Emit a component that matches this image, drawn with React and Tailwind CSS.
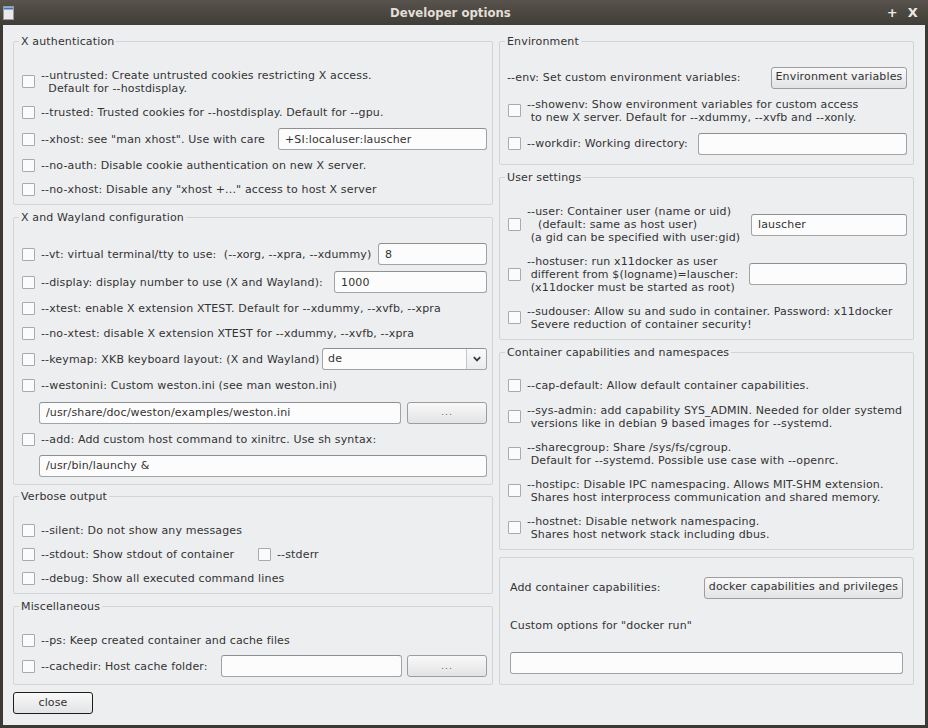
import React from 'react';

function Check() {
  return <span className="inline-block shrink-0 w-[13px] h-[13px] border border-[#a9aaac] bg-[#fbfbfb] rounded-[1px]" />;
}

function Input({ className = '', value = '' }) {
  return (
    <input
      readOnly
      value={value}
      className={`h-[22px] shrink-0 px-[6px] bg-[#fcfcfc] border border-[#a2a3a5] border-t-[#8e8f91] rounded-[3px] outline-none text-[#333] ${className}`}
    />
  );
}

function Btn({ className = '', children }) {
  return (
    <button className={`h-[22px] shrink-0 rounded-[3px] border border-[#9c9d9f] bg-gradient-to-b from-[#f9f9f9] to-[#e2e3e5] text-[#333] ${className}`}>
      {children}
    </button>
  );
}

function Lines({ lines }) {
  return (
    <div className="whitespace-pre leading-[13px]">
      {lines.map((l, i) => <div key={i}>{l}</div>)}
    </div>
  );
}

function CheckRow({ className = '', lines, children }) {
  return (
    <div className={`flex items-center pl-[8px] pr-[5px] ${className}`}>
      <Check />
      <div className="ml-[6px]"><Lines lines={lines} /></div>
      {children}
    </div>
  );
}

function Group({ className = '', title, children }) {
  return (
    <fieldset className={`shrink-0 border border-[#d3d4d6] rounded-[2px] ${className}`}>
      <legend className="ml-[5px] px-[2px] leading-[13px]">{title}</legend>
      {children}
    </fieldset>
  );
}

function Dots() {
  return <span className="text-[#666] text-[9px] tracking-[1px]">...</span>;
}

export default function App() {
  return (
    <div className="w-[928px] h-[728px] flex flex-col bg-[#3d3934] font-['DejaVu_Sans',sans-serif] text-[11px] tracking-[0.15px] text-[#333]">
      {/* title bar */}
      <div className="h-[25px] shrink-0 flex items-center bg-gradient-to-b from-[#58534c] to-[#403c37] px-[3px]">
        <svg width="11" height="14" viewBox="0 0 11 14" className="mt-[1px]">
          <rect x="0.5" y="0.5" width="10" height="13" fill="#e9e9e9" stroke="#9a9a9a" />
          <rect x="1" y="1.5" width="9" height="2" fill="#3f73c4" />
        </svg>
        <div className="flex-1 text-center font-bold text-[13px] tracking-[0px] text-[#e2ded8] font-['DejaVu_Sans_Condensed','DejaVu_Sans',sans-serif]">
          Developer options
        </div>
        <div className="flex items-center gap-[10px] mr-[7px] font-bold text-[13px] text-[#eceae6]">
          <span>+</span>
          <span>X</span>
        </div>
      </div>

      {/* client area */}
      <div className="flex-1 mx-[3px] mb-[3px] bg-[#edeef0] pt-[10px] pl-[10px] flex gap-[6px]">
        {/* left column */}
        <div className="w-[480px] flex flex-col">
          <Group title="X authentication" className="h-[170px]">
            <div className="pt-[19px]">
              <CheckRow className="h-[29px]" lines={['--untrusted: Create untrusted cookies restricting X access.', '  Default for --hostdisplay.']} />
              <CheckRow className="h-[32px]" lines={['--trusted: Trusted cookies for --hostdisplay. Default for --gpu.']} />
              <CheckRow className="h-[22px]" lines={['--xhost: see "man xhost". Use with care']}>
                <Input className="w-[209px] ml-auto" value="+SI:localuser:lauscher" />
              </CheckRow>
              <CheckRow className="h-[30px]" lines={['--no-auth: Disable cookie authentication on new X server.']} />
              <CheckRow className="h-[18px]" lines={['--no-xhost: Disable any "xhost +..." access to host X server']} />
            </div>
          </Group>

          <Group title="X and Wayland configuration" className="h-[274px] mt-[6px]">
            <div className="pt-[16px]">
              <CheckRow className="h-[28px]" lines={['--vt: virtual terminal/tty to use:  (--xorg, --xpra, --xdummy)']}>
                <Input className="w-[109px] ml-auto" value="8" />
              </CheckRow>
              <CheckRow className="h-[28px]" lines={['--display: display number to use (X and Wayland):']}>
                <Input className="w-[153px] ml-auto" value="1000" />
              </CheckRow>
              <CheckRow className="h-[25px]" lines={['--xtest: enable X extension XTEST. Default for --xdummy, --xvfb, --xpra']} />
              <CheckRow className="h-[25px]" lines={['--no-xtest: disable X extension XTEST for --xdummy, --xvfb, --xpra']} />
              <CheckRow className="h-[26px]" lines={['--keymap: XKB keyboard layout: (X and Wayland)']}>
                <div className="ml-auto w-[165px] h-[22px] flex bg-[#fcfcfc] border border-[#a2a3a5] border-t-[#8e8f91] rounded-[3px]">
                  <div className="flex-1 flex items-center px-[5px]">de</div>
                  <div className="w-[20px] flex items-center justify-center border-l border-[#c4c5c7] bg-gradient-to-b from-[#fafafa] to-[#ebecee] rounded-r-[3px]">
                    <svg width="8" height="6" viewBox="0 0 8 6">
                      <path d="M0.8 1.2 L4 4.4 L7.2 1.2" fill="none" stroke="#3a3a3a" strokeWidth="1.8" />
                    </svg>
                  </div>
                </div>
              </CheckRow>
              <CheckRow className="h-[27px]" lines={['--westonini: Custom weston.ini (see man weston.ini)']} />
              <div className="h-[27px] flex items-center pl-[25px] pr-[5px]">
                <Input className="w-[362px]" value="/usr/share/doc/weston/examples/weston.ini" />
                <Btn className="w-[80px] ml-auto"><Dots /></Btn>
              </div>
              <CheckRow className="h-[26px]" lines={['--add: Add custom host command to xinitrc. Use sh syntax:']} />
              <div className="h-[27px] flex items-center pl-[25px] pr-[5px]">
                <Input className="w-[448px]" value="/usr/bin/launchy &" />
              </div>
            </div>
          </Group>

          <Group title="Verbose output" className="h-[104px] mt-[5px]">
            <div className="pt-[15px]">
              <CheckRow className="h-[24px]" lines={['--silent: Do not show any messages']} />
              <div className="h-[24px] flex items-center pl-[8px]">
                <div className="w-[236px] flex items-center shrink-0">
                  <Check />
                  <span className="ml-[6px] whitespace-pre leading-[13px]">--stdout: Show stdout of container</span>
                </div>
                <Check />
                <span className="ml-[6px] whitespace-pre leading-[13px]">--stderr</span>
              </div>
              <CheckRow className="h-[24px]" lines={['--debug: Show all executed command lines']} />
            </div>
          </Group>

          <Group title="Miscellaneous" className="h-[85px] mt-[6px]">
            <div className="pt-[14px]">
              <CheckRow className="h-[26px]" lines={['--ps: Keep created container and cache files']} />
              <CheckRow className="h-[26px]" lines={['--cachedir: Host cache folder:']}>
                <Input className="w-[181px] ml-auto" />
                <Btn className="w-[80px] ml-[5px]"><Dots /></Btn>
              </CheckRow>
            </div>
          </Group>

          <button className="mt-[7px] w-[80px] h-[22px] rounded-[3px] border border-[#1e1e1e] bg-gradient-to-b from-[#f9f9f9] to-[#e2e3e5] text-[#333]">
            close
          </button>
        </div>

        {/* right column */}
        <div className="w-[415px] flex flex-col">
          <Group title="Environment" className="h-[130px]">
            <div className="pt-[16px]">
              <div className="h-[27px] flex items-center pl-[7px] pr-[6px]">
                <span className="whitespace-pre leading-[13px]">--env: Set custom environment variables:</span>
                <Btn className="w-[136px] ml-auto">Environment variables</Btn>
              </div>
              <CheckRow className="h-[39px] !pr-[6px]" lines={['--showenv: Show environment variables for custom access', ' to new X server. Default for --xdummy, --xvfb and --xonly.']} />
              <CheckRow className="h-[27px] !pr-[6px]" lines={['--workdir: Working directory:']}>
                <Input className="w-[209px] ml-auto" />
              </CheckRow>
            </div>
          </Group>

          <Group title="User settings" className="h-[169px] mt-[6px]">
            <div className="pt-[18px]">
              <CheckRow className="h-[45px] !pr-[6px]" lines={['--user: Container user (name or uid)', '   (default: same as host user)', ' (a gid can be specified with user:gid)']}>
                <Input className="w-[156px] ml-auto" value="lauscher" />
              </CheckRow>
              <CheckRow className="h-[54px] !pr-[6px]" lines={['--hostuser: run x11docker as user', ' different from $(logname)=lauscher:', ' (x11docker must be started as root)']}>
                <Input className="w-[158px] ml-auto" />
              </CheckRow>
              <CheckRow className="h-[33px] !pr-[6px]" lines={['--sudouser: Allow su and sudo in container. Password: x11docker', ' Severe reduction of container security!']} />
            </div>
          </Group>

          <Group title="Container capabilities and namespaces" className="h-[204px] mt-[6px]">
            <div className="pt-[14px]">
              <CheckRow className="h-[25px]" lines={['--cap-default: Allow default container capabilities.']} />
              <CheckRow className="h-[37px]" lines={['--sys-admin: add capability SYS_ADMIN. Needed for older systemd', ' versions like in debian 9 based images for --systemd.']} />
              <CheckRow className="h-[37px]" lines={['--sharecgroup: Share /sys/fs/cgroup.', ' Default for --systemd. Possible use case with --openrc.']} />
              <CheckRow className="h-[37px]" lines={['--hostipc: Disable IPC namespacing. Allows MIT-SHM extension.', ' Shares host interprocess communication and shared memory.']} />
              <CheckRow className="h-[37px]" lines={['--hostnet: Disable network namespacing.', ' Shares host network stack including dbus.']} />
            </div>
          </Group>

          <div className="h-[128px] mt-[7px] shrink-0 border border-[#d3d4d6] rounded-[2px] pt-[16px] px-[10px]">
            <div className="h-[27px] flex items-center">
              <span className="whitespace-pre leading-[13px]">Add container capabilities:</span>
              <Btn className="w-[199px] ml-auto">docker capabilities and privileges</Btn>
            </div>
            <div className="h-[48px] flex items-center">
              <span className="whitespace-pre leading-[13px]">Custom options for "docker run"</span>
            </div>
            <div className="h-[27px] flex items-center">
              <Input className="w-full" />
            </div>
          </div>
        </div>
      </div>
    </div>
  );
}
